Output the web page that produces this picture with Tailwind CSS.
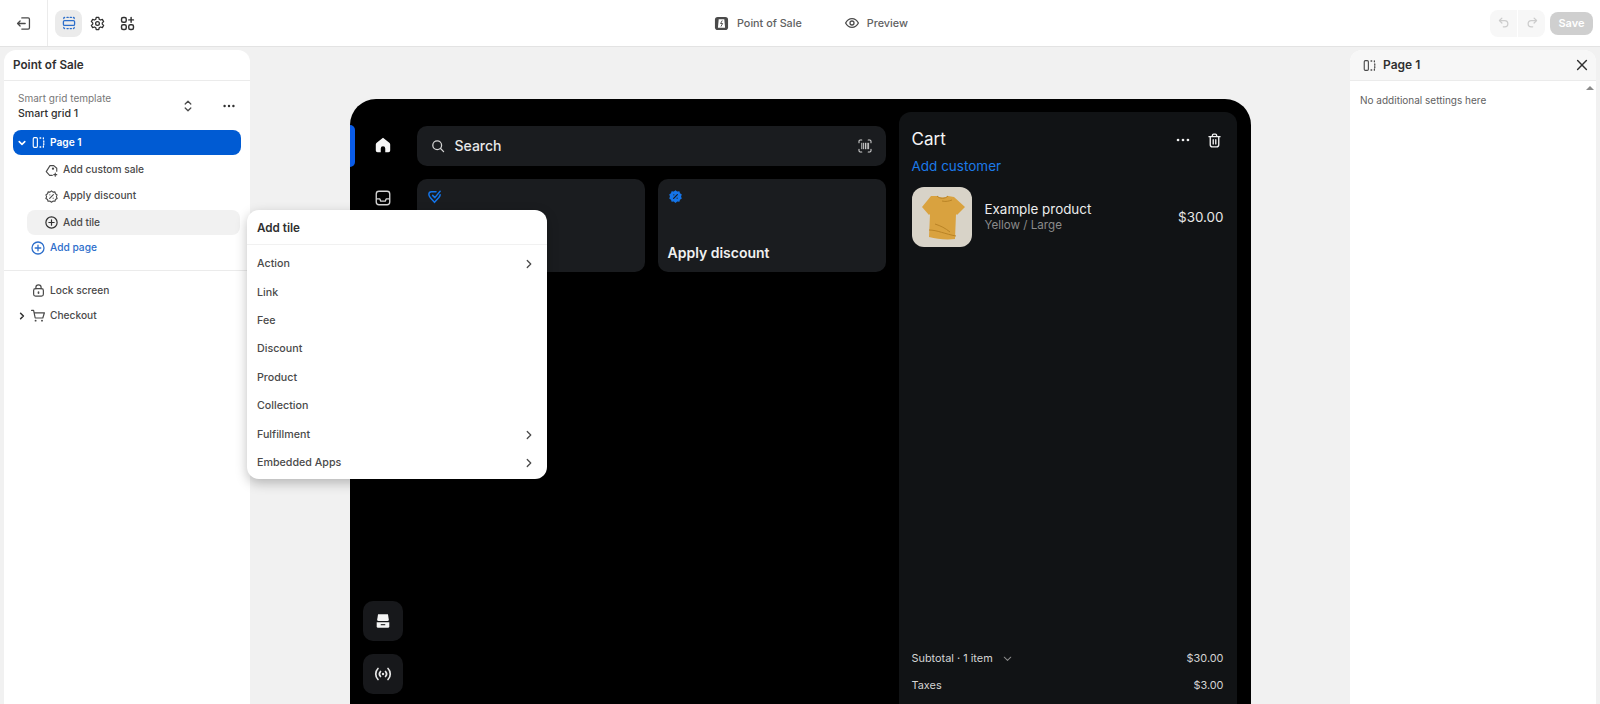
<!DOCTYPE html>
<html lang="en">
<head>
  <meta charset="UTF-8">
  <title>Point of Sale</title>
  <script src="https://cdn.jsdelivr.net/npm/@tailwindcss/browser@4"></script>
</head>
<body class="h-[704px] overflow-hidden bg-[#f1f1f1] font-['Inter',sans-serif] text-[#303030]">
  <div class="relative flex h-[704px] flex-col">

    <!-- Top bar -->
    <header class="flex h-[47px] shrink-0 items-center border-b border-[#e3e3e3] bg-white">
      <div class="flex h-full w-[48px] items-center justify-center border-r border-[#ebebeb]">
        <svg class="h-[17px] w-[17px]" viewBox="0 0 20 20" fill="none" stroke="#4a4a4a" stroke-width="1.5" stroke-linecap="round" stroke-linejoin="round"><path d="M8 3.500h7.500a1.500 1.500 0 0 1 1.500 1.500v10a1.500 1.500 0 0 1-1.500 1.500H8"/><path d="M12 10H3M6 7l-3 3 3 3"/></svg>
      </div>
      <div class="ml-[7px] flex items-center">
        <div class="flex h-[27px] w-[27px] items-center justify-center rounded-lg bg-[#ebebeb]">
          <svg class="h-[16px] w-[16px]" viewBox="0 0 20 20" fill="none" stroke="#2c6ecb" stroke-width="1.6" stroke-linecap="round"><rect x="3" y="7" width="14" height="6" rx="1.500"/><path d="M3.500 4.500V4A1 1 0 0 1 4.500 3M7.500 3h1.500M11.500 3H13M15.500 3a1 1 0 0 1 1 1v.5M3.500 15.500v.5a1 1 0 0 0 1 1M7.500 17h1.500M11.500 17H13M15.500 17a1 1 0 0 0 1-1v-.5"/></svg>
        </div>
        <div class="ml-[2px] flex h-[27px] w-[27px] items-center justify-center">
          <svg class="h-[17px] w-[17px]" viewBox="0 0 20 20" fill="none" stroke="#303030" stroke-width="1.5" stroke-linejoin="round"><path d="M8.500 2.800h3l.5 2.200 1.600.9 2.100-.7 1.500 2.600-1.600 1.500v1.400l1.600 1.500-1.500 2.600-2.100-.7-1.600.9-.5 2.200h-3l-.5-2.200-1.600-.9-2.100.7-1.500-2.600 1.600-1.500V9.300L2.800 7.800l1.500-2.600 2.100.7 1.600-.9z"/><circle cx="10" cy="10" r="2.200"/></svg>
        </div>
        <div class="ml-[3px] flex h-[27px] w-[27px] items-center justify-center">
          <svg class="h-[17px] w-[17px]" viewBox="0 0 20 20" fill="none" stroke="#303030" stroke-width="1.700" stroke-linecap="round"><rect x="3" y="3" width="5.500" height="5.500" rx="1.800"/><rect x="3" y="11.500" width="5.500" height="5.500" rx="1.800"/><rect x="11.500" y="11.500" width="5.500" height="5.500" rx="1.800"/><path d="M14.250 3v5.500M11.500 5.750H17"/></svg>
        </div>
      </div>

      <div class="ml-[573px] flex items-center gap-[8px] text-[10.800px] font-medium text-[#616161]">
        <svg class="h-[15px] w-[15px]" viewBox="0 0 16 16"><rect x="1" y="1" width="14" height="14" rx="3" fill="#4a4a4a"/><path d="M5 3.500h6l.8 9H4.200z" fill="#fff"/><path d="M8.800 4.800 7 8h2.200l-1.800 3.200" fill="none" stroke="#4a4a4a" stroke-width="1"/></svg>
        <span class="mt-[2px]">Point of Sale</span>
      </div>
      <div class="ml-[42px] flex items-center gap-[7px] text-[10.800px] font-medium text-[#616161]">
        <svg class="h-[16px] w-[16px]" viewBox="0 0 20 20" fill="none" stroke="#4a4a4a" stroke-width="1.600"><path d="M2 10c2-3.800 4.700-5.500 8-5.500s6 1.700 8 5.500c-2 3.800-4.700 5.500-8 5.500S4 13.800 2 10z"/><circle cx="10" cy="10" r="2.500"/></svg>
        <span class="mt-[2px]">Preview</span>
      </div>

      <div class="ml-auto mr-[7px] flex items-center gap-[5px]">
        <div class="flex h-[27px] w-[55px] rounded-lg bg-[#f7f7f7]">
          <div class="flex flex-1 items-center justify-center border-r border-white">
            <svg class="h-[14px] w-[14px]" viewBox="0 0 20 20" fill="none" stroke="#cccccc" stroke-width="1.800" stroke-linecap="round" stroke-linejoin="round"><path d="M7 3 3.500 6.500 7 10"/><path d="M4 6.500h7a4.500 4.500 0 0 1 0 9H9"/></svg>
          </div>
          <div class="flex flex-1 items-center justify-center">
            <svg class="h-[14px] w-[14px]" viewBox="0 0 20 20" fill="none" stroke="#cccccc" stroke-width="1.800" stroke-linecap="round" stroke-linejoin="round"><path d="M13 3l3.500 3.500L13 10"/><path d="M16 6.500H9a4.500 4.500 0 0 0 0 9h2"/></svg>
          </div>
        </div>
        <div class="flex h-[23px] w-[43px] items-center justify-center rounded-lg bg-[#cfcfcf] text-[11px] font-semibold text-white">Save</div>
      </div>
    </header>

    <main class="flex min-h-0 flex-1">
      <!-- Left panel -->
      <aside class="ml-[4px] mt-[3px] w-[246px] shrink-0 rounded-t-xl bg-white text-[10.200px] font-medium text-[#4a4a4a]">
        <div class="flex h-[31px] items-center border-b border-[#ebebeb] pl-[9px] pt-[2px] text-[11.700px] font-semibold text-[#303030]">Point of Sale</div>
        <div class="flex h-[49px] items-center pl-[14px] pr-[13px]">
          <div class="flex-1 leading-[16px]">
            <div class="text-[10px] font-normal text-[#777777]">Smart grid template</div>
            <div class="text-[10.600px] text-[#303030]">Smart grid 1</div>
          </div>
          <svg class="mr-[25px] h-[16px] w-[16px]" viewBox="0 0 20 20" fill="none" stroke="#4a4a4a" stroke-width="1.600" stroke-linecap="round" stroke-linejoin="round"><path d="M6.500 7.500 10 4l3.500 3.500M6.500 12.500 10 16l3.500-3.500"/></svg>
          <svg class="h-[16px] w-[16px]" viewBox="0 0 20 20" fill="#303030"><circle cx="4.500" cy="10" r="1.500"/><circle cx="10" cy="10" r="1.500"/><circle cx="15.500" cy="10" r="1.500"/></svg>
        </div>

        <div class="mx-[9px] flex h-[25px] items-center rounded-lg bg-[#005bd3] pl-[2px] font-semibold text-white">
          <svg class="h-[14px] w-[14px]" viewBox="0 0 20 20" fill="none" stroke="#fff" stroke-width="2.200" stroke-linecap="round" stroke-linejoin="round"><path d="m6 8 4 4 4-4"/></svg>
          <svg class="ml-[2px] h-[15px] w-[15px]" viewBox="0 0 20 20" fill="none" stroke="#fff" stroke-width="1.500" stroke-linecap="round"><rect x="3" y="3.500" width="5.500" height="13" rx="1.500"/><path d="M12 4h1M16.500 3.800v1.200M17 8v1.500M17 11.500V13M16.500 15v1.200M12 16h1" stroke-width="1.700"/></svg>
          <span class="ml-[4px]">Page 1</span>
        </div>

        <div class="mt-[2px] flex h-[26px] items-center pl-[40px]">
          <svg class="h-[15px] w-[15px]" viewBox="0 0 20 20" fill="none" stroke="#4a4a4a" stroke-width="1.500" stroke-linecap="round" stroke-linejoin="round"><path d="M11 16.500H7.500L3 11.500 8 3.500h5l4 3.500v4"/><circle cx="12" cy="7.500" r=".8"/><path d="M15 13.500v4M13 15.500h4"/></svg>
          <span class="ml-[4px]">Add custom sale</span>
        </div>
        <div class="flex h-[26px] items-center pl-[40px]">
          <svg class="h-[15px] w-[15px]" viewBox="0 0 20 20" fill="none" stroke="#4a4a4a" stroke-width="1.500" stroke-linecap="round" stroke-linejoin="round"><path d="M10 2.500l2 1.600 2.600-.2.700 2.500 2.200 1.400-1 2.400 1 2.400-2.200 1.400-.7 2.300-2.600-.1-2 1.500-2-1.500-2.600.1-.7-2.300-2.200-1.400 1-2.400-1-2.400 2.200-1.400.7-2.500 2.600.2z"/><path d="M12.500 7.500l-5 5M7.800 7.800h.01M12.200 12.200h.01"/></svg>
          <span class="ml-[4px]">Apply discount</span>
        </div>
        <div class="ml-[23px] mr-[10px] mt-px flex h-[25px] items-center rounded-lg bg-[#f1f1f1] pl-[17px]">
          <svg class="h-[15px] w-[15px]" viewBox="0 0 20 20" fill="none" stroke="#303030" stroke-width="1.600" stroke-linecap="round"><circle cx="10" cy="10" r="7.500"/><path d="M10 6.500v7M6.500 10h7"/></svg>
          <span class="ml-[4px]">Add tile</span>
        </div>
        <div class="flex h-[25px] items-center pl-[26px] text-[#2c6ecb]">
          <svg class="h-[16px] w-[16px]" viewBox="0 0 20 20" fill="none" stroke="#2c6ecb" stroke-width="1.600" stroke-linecap="round"><circle cx="10" cy="10" r="7.500"/><path d="M10 6.500v7M6.500 10h7"/></svg>
          <span class="ml-[4px]">Add page</span>
        </div>

        <div class="mt-[10px] border-t border-[#ebebeb] pt-[7px]">
          <div class="flex h-[25px] items-center pl-[27px]">
            <svg class="h-[15px] w-[15px]" viewBox="0 0 20 20" fill="none" stroke="#4a4a4a" stroke-width="1.600" stroke-linecap="round"><rect x="3.500" y="7.500" width="13" height="10" rx="2.500"/><path d="M6.500 7.500V6a3.500 3.500 0 0 1 7 0v1.500"/><path d="M10 12v1.500" stroke-width="2.200"/></svg>
            <span class="ml-[4px]">Lock screen</span>
          </div>
          <div class="flex h-[25px] items-center pl-[11px]">
            <svg class="h-[14px] w-[14px]" viewBox="0 0 20 20" fill="none" stroke="#303030" stroke-width="2.200" stroke-linecap="round" stroke-linejoin="round"><path d="m8 6 4 4-4 4"/></svg>
            <svg class="ml-[1px] h-[16px] w-[16px]" viewBox="0 0 20 20" fill="none" stroke="#4a4a4a" stroke-width="1.500" stroke-linecap="round" stroke-linejoin="round"><path d="M2 3h2.500l2 9.500h9.500L18 6H5"/><path d="M7 15.800h.01M15 15.800h.01" stroke-width="2.400"/></svg>
            <span class="ml-[4px]">Checkout</span>
          </div>
        </div>
      </aside>

      <!-- Canvas with the device preview -->
      <section class="flex min-w-0 flex-1 justify-center pt-[52px]">
        <div class="flex h-full w-[901px] rounded-t-[26px] bg-black">
          <div class="flex w-[67px] shrink-0 flex-col items-center justify-between pb-[10px] pt-[26px]">
            <div class="relative flex w-full flex-col items-center">
              <div class="absolute left-0 top-0 h-[42px] w-[5px] rounded-r-md bg-[#0a5ce8]"></div>
              <div class="flex h-[40px] items-center">
                <svg class="h-[18px] w-[18px]" viewBox="0 0 20 20" fill="#f5f5f5"><path d="M10 2 3 7.500c-.6.500-1 1.200-1 2V16a2 2 0 0 0 2 2h3.500v-4a2.500 2.500 0 0 1 5 0v4H16a2 2 0 0 0 2-2V9.500c0-.8-.4-1.500-1-2z"/></svg>
              </div>
              <div class="mt-[13px] flex h-[40px] items-center">
                <svg class="h-[18px] w-[18px]" viewBox="0 0 20 20" fill="none" stroke="#d4d4d4" stroke-width="1.500" stroke-linejoin="round"><rect x="2.500" y="2.500" width="15" height="15" rx="3"/><path d="M2.500 11h4l1 2.500h5l1-2.500h4"/></svg>
              </div>
            </div>
            <div class="flex flex-col gap-[13px]">
              <div class="flex h-[40px] w-[40px] items-center justify-center rounded-[10px] bg-[#17181b]">
                <svg class="h-[18px] w-[18px]" viewBox="0 0 20 20" fill="#f5f5f5"><path d="M4.500 2.500h11l1 6a1.500 1.500 0 0 1-1.500 1.500H5a1.500 1.500 0 0 1-1.500-1.500z"/><path d="M3 11.500h14V16a1.500 1.500 0 0 1-1.500 1.500h-11A1.500 1.500 0 0 1 3 16z"/><path d="M7.500 13.500h5v1.200h-5z" fill="#17181b"/></svg>
              </div>
              <div class="flex h-[40px] w-[40px] items-center justify-center rounded-[10px] bg-[#17181b]">
                <svg class="h-[20px] w-[20px]" viewBox="0 0 20 20" fill="none" stroke="#e5e5e5" stroke-width="1.700" stroke-linecap="round"><path d="M5 4.500c-3 3-3 8 0 11M15 4.500c3 3 3 8 0 11M7.500 7.500c-1.400 1.500-1.400 3.500 0 5M12.500 7.500c1.400 1.500 1.400 3.500 0 5"/><circle cx="10" cy="10" r="1.200" fill="#e5e5e5" stroke="none"/></svg>
              </div>
            </div>
          </div>

          <div class="w-[469px] shrink-0 pt-[27px]">
            <div class="flex h-[40px] items-center rounded-[10px] bg-[#1a1c1f] pl-[13px] pr-[13px] text-[14px] font-medium text-[#e8e8e8]">
              <svg class="h-[16px] w-[16px]" viewBox="0 0 20 20" fill="none" stroke="#d4d4d4" stroke-width="1.600" stroke-linecap="round"><circle cx="9" cy="9" r="5.500"/><path d="m13.200 13.200 3.800 3.800"/></svg>
              <span class="ml-[9px] flex-1 pb-px">Search</span>
              <svg class="h-[16px] w-[16px]" viewBox="0 0 20 20" fill="none" stroke="#d4d4d4" stroke-width="1.300" stroke-linecap="round"><path d="M2.500 6V4a1.500 1.500 0 0 1 1.500-1.500h2M14 2.500h2A1.500 1.500 0 0 1 17.500 4v2M2.500 14v2A1.500 1.500 0 0 0 4 17.500h2M14 17.500h2a1.500 1.500 0 0 0 1.500-1.500v-2"/><path d="M6 6.500v7M8.300 6.500v7M10.600 6.500v7M12.700 6.500v7M14.500 6.500v7" stroke-width="1.200"/></svg>
            </div>
            <div class="mt-[13px] grid grid-cols-[228px_228px] gap-[13px]">
              <div class="flex h-[93px] flex-col justify-between rounded-[10px] bg-[#1a1c1f] pb-[9px] pl-[10px] pt-[10px] text-[14px] font-semibold text-[#f0f0f0]">
                <svg class="h-[15px] w-[15px]" viewBox="0 0 20 20" fill="none" stroke="#1474e8" stroke-width="2" stroke-linecap="round" stroke-linejoin="round"><path d="M12 3.500H6A3.500 3.500 0 0 0 2.500 7c0 2 .8 3.500 2 4.800l5.500 6 5.500-6c1-1.200 1.800-2.400 2-4"/><path d="m7.500 8.500 3 3L17.500 3"/></svg>
                <span>Add custom sale</span>
              </div>
              <div class="flex h-[93px] flex-col justify-between rounded-[10px] bg-[#1a1c1f] pb-[9px] pl-[10px] pt-[10px] text-[14px] font-semibold text-[#f0f0f0]">
                <svg class="h-[15px] w-[15px]" viewBox="0 0 20 20"><path fill="#1474e8" d="M10 1.500l2.300 1.700 2.900-.2.800 2.700 2.400 1.600-1 2.700 1 2.700-2.400 1.600-.8 2.700-2.900-.2-2.300 1.700-2.300-1.700-2.900.2-.8-2.700-2.400-1.600 1-2.700-1-2.700 2.400-1.600.8-2.700 2.900.2z"/><path d="M12.500 7.500l-5 5M7.800 7.800h.01M12.200 12.200h.01" stroke="#1a1c1f" stroke-width="1.600" stroke-linecap="round"/></svg>
                <span>Apply discount</span>
              </div>
            </div>
          </div>

          <!-- Cart -->
          <div class="ml-[13px] mr-[14px] mt-[13px] flex w-[338px] shrink-0 flex-col justify-between rounded-t-xl bg-[#111315] px-[13px]">
            <div>
              <div class="flex h-[28px] items-center pt-[28px] text-[17px] text-[#f5f5f5]">
                <span class="flex-1">Cart</span>
                <svg class="mr-[14px] h-[18px] w-[18px]" viewBox="0 0 20 20" fill="#f0f0f0"><circle cx="4.500" cy="10" r="1.500"/><circle cx="10" cy="10" r="1.500"/><circle cx="15.500" cy="10" r="1.500"/></svg>
                <svg class="mr-[1px] h-[17px] w-[17px]" viewBox="0 0 20 20" fill="none" stroke="#f0f0f0" stroke-width="1.600" stroke-linecap="round" stroke-linejoin="round"><path d="M3.500 5.500h13M7.500 5.500V4a1.500 1.500 0 0 1 1.500-1.500h2A1.500 1.500 0 0 1 12.500 4v1.500M5 5.500V15a2.500 2.500 0 0 0 2.500 2.500h5A2.500 2.500 0 0 0 15 15V5.500M8.500 9v5M11.500 9v5"/></svg>
              </div>
              <div class="mt-[17px] text-[13.500px] leading-[18px] text-[#1c7ae8]">Add customer</div>
              <div class="mt-[12px] flex items-center">
                <div class="h-[60px] w-[60px] overflow-hidden rounded-[12px] bg-[#d8d3c8]">
                  <svg class="h-[60px] w-[60px]" viewBox="0 0 60 60"><path fill="#d9a23f" d="M25 9c3 2 8 2 11 0l6 1 11 10-8 8-1-1-1 25c-9 1-18 0-26-2l1-23-1 1-7-8 9-11z"/><path d="M25 9c3 3 8 3 11 0" fill="none" stroke="#b98326" stroke-width="1"/><path d="M17 43c8 0 16 4 27 6M23 37c6 2 10 4 15 8M30 14c4 1 7 0 10-1" fill="none" stroke="#b98326" stroke-width="1"/></svg>
                </div>
                <div class="ml-[13px] flex-1">
                  <div class="text-[13.400px] leading-[16px] text-[#ececec]">Example product</div>
                  <div class="text-[11.600px] leading-[16px] text-[#8a8a8a]">Yellow / Large</div>
                </div>
                <span class="text-[13.400px] text-[#e8e8e8]">$30.00</span>
              </div>
            </div>
            <div class="pb-[5px] text-[10.900px] text-[#d4d4d4]">
              <div class="flex h-[27px] items-center justify-between">
                <div class="flex items-center gap-[8px]">
                  <span>Subtotal · 1 item</span>
                  <svg class="h-[13px] w-[13px]" viewBox="0 0 20 20" fill="none" stroke="#8a8a8a" stroke-width="1.600" stroke-linecap="round" stroke-linejoin="round"><path d="m5 8 5 5 5-5"/></svg>
                </div>
                <span>$30.00</span>
              </div>
              <div class="flex h-[27px] items-center justify-between">
                <span>Taxes</span>
                <span>$3.00</span>
              </div>
            </div>
          </div>
        </div>
      </section>

      <!-- Right panel -->
      <aside class="mr-[4px] mt-[3px] w-[246px] shrink-0 rounded-t-xl bg-white">
        <div class="flex h-[31px] items-center rounded-t-xl border-b border-[#ebebeb] bg-[#f7f7f7] pl-[12px] pr-[6px] text-[12px] font-semibold">
          <svg class="h-[15px] w-[15px]" viewBox="0 0 20 20" fill="none" stroke="#4a4a4a" stroke-width="1.500" stroke-linecap="round"><rect x="3" y="3.500" width="5.500" height="13" rx="1.500"/><path d="M12 4h1M16.500 3.800v1.200M17 8v1.500M17 11.500V13M16.500 15v1.200M12 16h1" stroke-width="1.700"/></svg>
          <span class="ml-[6px] flex-1">Page 1</span>
          <svg class="h-[16px] w-[16px]" viewBox="0 0 20 20" fill="none" stroke="#303030" stroke-width="1.800" stroke-linecap="round"><path d="m4.500 4.500 11 11M15.500 4.500l-11 11"/></svg>
        </div>
        <div class="relative pl-[10px] pt-[12px] text-[10px] leading-[14px] text-[#616161]">
          No additional settings here
          <div class="absolute right-[2px] top-[5px] h-0 w-0 border-x-[4px] border-b-[4px] border-x-transparent border-b-[#8a8a8a]"></div>
        </div>
      </aside>
    </main>

    <!-- Add tile popover -->
    <div class="absolute left-[247px] top-[210px] w-[300px] rounded-xl bg-white pb-[2px] text-[10.700px] font-medium text-[#4a4a4a] shadow-[0_4px_12px_rgba(0,0,0,0.25)]">
      <div class="flex h-[35px] items-center border-b border-[#f1f1f1] pl-[10px] pt-[4px] text-[11.700px] font-semibold text-[#303030]">Add tile</div>
      <div class="pt-[5px]">
        <div class="flex h-[28.400px] items-center justify-between pl-[10px] pr-[11px]">
          <span>Action</span>
          <svg class="h-[14px] w-[14px]" viewBox="0 0 20 20" fill="none" stroke="#4a4a4a" stroke-width="1.800" stroke-linecap="round" stroke-linejoin="round"><path d="m7.500 5 5 5-5 5"/></svg>
        </div>
        <div class="flex h-[28.400px] items-center pl-[10px]">Link</div>
        <div class="flex h-[28.400px] items-center pl-[10px]">Fee</div>
        <div class="flex h-[28.400px] items-center pl-[10px]">Discount</div>
        <div class="flex h-[28.400px] items-center pl-[10px]">Product</div>
        <div class="flex h-[28.400px] items-center pl-[10px]">Collection</div>
        <div class="flex h-[28.400px] items-center justify-between pl-[10px] pr-[11px]">
          <span>Fulfillment</span>
          <svg class="h-[14px] w-[14px]" viewBox="0 0 20 20" fill="none" stroke="#4a4a4a" stroke-width="1.800" stroke-linecap="round" stroke-linejoin="round"><path d="m7.500 5 5 5-5 5"/></svg>
        </div>
        <div class="flex h-[28.400px] items-center justify-between pl-[10px] pr-[11px]">
          <span>Embedded Apps</span>
          <svg class="h-[14px] w-[14px]" viewBox="0 0 20 20" fill="none" stroke="#4a4a4a" stroke-width="1.800" stroke-linecap="round" stroke-linejoin="round"><path d="m7.500 5 5 5-5 5"/></svg>
        </div>
      </div>
    </div>
  </div>
</body>
</html>
